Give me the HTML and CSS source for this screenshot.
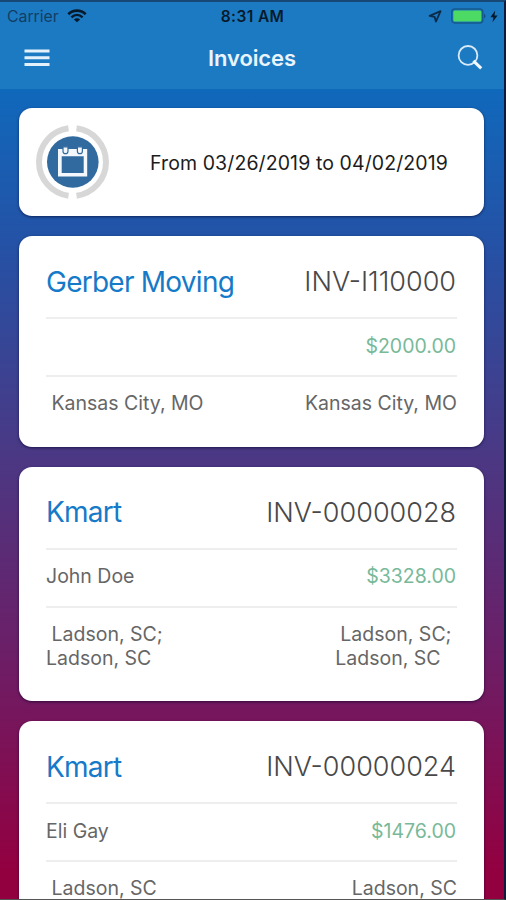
FILE: index.html
```html
<!DOCTYPE html>
<html lang="en">
<head>
    <meta charset="UTF-8">
    <meta name="viewport" content="width=device-width, initial-scale=1.0">
    <title>Invoices</title>
    <link rel="stylesheet" href="styles.css">
</head>
<body>
<div class="screen">

  <header class="header">
    <!-- Status bar -->
    <div class="status-bar">
      <div class="status-left">
        <span class="carrier">Carrier</span>
        <svg class="wifi" width="20" height="14" viewBox="0 0 20 14" fill="none" stroke="#071a2c">
          <path d="M1.3 5.2C6.2 .4 13.8 .4 18.7 5.2" stroke-width="2.6"/>
          <path d="M4.4 8.4C7.7 5.2 12.3 5.2 15.6 8.4" stroke-width="2.4"/>
          <path d="M10 13.3L6.9 10.4C8.8 8.8 11.2 8.8 13.1 10.4Z" fill="#071a2c" stroke="none"/>
        </svg>
      </div>
      <div class="clock">8:31 AM</div>
      <div class="status-right">
        <svg width="14" height="13" viewBox="0 0 14 13" fill="none" stroke="#0b2b48" stroke-width="1.8" stroke-linejoin="round">
          <path d="M12.6 1.2L1.6 5.8L6.6 6.8L7.9 11.6Z"/>
        </svg>
        <svg class="battery" width="36" height="16" viewBox="0 0 36 16">
          <rect x=".8" y="1" width="31" height="14" rx="3" fill="none" stroke="#14598d" stroke-width="1.4"/>
          <rect x="2.3" y="2.4" width="28" height="11.2" rx="1.5" fill="#4cd964"/>
          <path d="M33.2 5.5Q35.5 8 33.2 10.5Z" fill="#0d4676"/>
        </svg>
        <svg width="8" height="13" viewBox="0 0 8 13">
          <path d="M5.2 .5L.4 7.2H3.4L2.5 12.3L7.6 5.4H4.5Z" fill="#071a2c"/>
        </svg>
      </div>
    </div>

    <!-- Navigation bar -->
    <div class="nav-bar">
      <svg width="26" height="20" viewBox="0 0 26 20" stroke="#e4f1fb" stroke-width="3">
        <path d="M.5 3H25.5M.5 9.8H25.5M.5 16.6H25.5"/>
      </svg>
      <h1 class="title">Invoices</h1>
      <svg width="26" height="26" viewBox="0 0 26 26" fill="none" stroke="#d9ebf9">
        <circle cx="11" cy="10.4" r="9.4" stroke-width="1.8"/>
        <path d="M16.4 15.9L24.2 23.4" stroke="#f1f8fe" stroke-width="3.1"/>
      </svg>
    </div>
  </header>

  <main class="list">
    <section class="card date-card">
      <svg width="74" height="74" viewBox="0 0 74 74">
        <g fill="none" stroke="#d7d7d7" stroke-width="6">
          <path d="M32.5 3.3A34 34 0 0 0 32.5 70.7"/>
          <path d="M40.5 3.3A34 34 0 0 1 40.5 70.7"/>
        </g>
        <circle cx="36.8" cy="37" r="25.8" fill="#316a9f"/>
        <path d="M22 24H51.2V51.6H22Z M25.7 31.2V47.9H47.7V31.2Z" fill="#f4f8fc" fill-rule="evenodd"/>
        <g fill="#f4f8fc" stroke="#316a9f" stroke-width="1.2">
          <path d="M27 21.8V26.2A2.5 2.5 0 0 0 32 26.2V21.8Z"/>
          <path d="M41.4 21.8V26.2A2.5 2.5 0 0 0 46.4 26.2V21.8Z"/>
        </g>
      </svg>
      <div class="date-range">From 03/26/2019 to 04/02/2019</div>
    </section>

    <section class="card">
      <div class="row row-top">
        <h2 class="customer">Gerber Moving</h2>
        <span class="number">INV-I110000</span>
      </div>
      <div class="row">
        <span></span>
        <span class="amount">$2000.00</span>
      </div>
      <div class="row row-places">
        <div>&nbsp;Kansas City, MO</div>
        <div class="to">Kansas City, MO</div>
      </div>
    </section>

    <section class="card">
      <div class="row row-top">
        <h2 class="customer">Kmart</h2>
        <span class="number">INV-00000028</span>
      </div>
      <div class="row">
        <span>John Doe</span>
        <span class="amount">$3328.00</span>
      </div>
      <div class="row row-places">
        <div>&nbsp;Ladson, SC;<br>Ladson, SC</div>
        <div class="to">Ladson, SC;&nbsp;<br>Ladson, SC&nbsp;&nbsp;&nbsp;</div>
      </div>
    </section>

    <section class="card">
      <div class="row row-top">
        <h2 class="customer">Kmart</h2>
        <span class="number">INV-00000024</span>
      </div>
      <div class="row">
        <span>Eli Gay</span>
        <span class="amount">$1476.00</span>
      </div>
      <div class="row row-places">
        <div>&nbsp;Ladson, SC</div>
        <div class="to">Ladson, SC</div>
      </div>
    </section>
  </main>

</div>
</body>
</html>
```
FILE: styles.css
```css
* {
  box-sizing: border-box;
}

body {
  margin: 0;
  font-family: Inter, "Liberation Sans", sans-serif;
  font-size: 19.5px;
  color: #666;
  overflow: hidden;
}

.screen {
  height: 900px;
  overflow: hidden;
  border-top: 2px solid #174775;
  border-right: 2px solid #111a38;
  border-bottom: 1px solid #555;
  background: linear-gradient(to bottom, #1068bb 90px, #2452a6 240px, #4c3783 460px, #74185f 700px, #930040 870px);
}

.header {
  height: 87px;
  background: #1c7ac2;
}

/* Status bar */
.status-bar {
  display: grid;
  grid-template-columns: 1fr auto 1fr;
  align-items: center;
  height: 28px;
  padding: 0 6px 0 7px;
  font-size: 15px;
}

.status-left,
.status-right {
  display: flex;
  align-items: center;
}

.status-left {
  gap: 8px;
}

.carrier {
  color: #123e66;
  font-size: 15.8px;
}

.clock {
  color: #071a2c;
  font-size: 15.5px;
  font-weight: 600;
  letter-spacing: 0.4px;
}

.status-right {
  justify-content: flex-end;
}

.battery {
  margin: 0 3px 0 9px;
}

/* Navigation bar */
.nav-bar {
  display: flex;
  align-items: center;
  justify-content: space-between;
  height: 56px;
  padding: 0 21px 0 24px;
}

.title {
  margin: 0 3px 0 0;
  color: #e9f4fd;
  font-size: 22px;
  font-weight: 600;
  letter-spacing: -0.1px;
}

/* Cards */
.list {
  display: flex;
  flex-direction: column;
  gap: 20px;
  padding: 19px 20px 0 19px;
}

.card {
  flex: none;
  padding: 0 27px 31.5px;
  background: #fff;
  border-radius: 13px;
  box-shadow: 0 1px 3px rgba(0, 0, 40, 0.6);
}

.date-card {
  display: flex;
  align-items: center;
  gap: 40px;
  height: 108px;
  padding: 0 0 0 17px;
}

.date-range {
  padding-top: 1px;
  color: #1c1c1c;
  letter-spacing: 0.1px;
  white-space: nowrap;
}

.row {
  display: flex;
  align-items: center;
  justify-content: space-between;
  height: 58px;
  padding-bottom: 3px;
  border-bottom: 2px solid #eee;
}

.row-top {
  height: 83px;
  padding: 10px 0 0;
}

.row-places {
  align-items: flex-start;
  height: auto;
  padding: 14px 0 0;
  border: 0;
  line-height: 24px;
}

.customer {
  margin: 0;
  color: #157ac8;
  font-size: 28px;
  font-weight: 400;
  letter-spacing: -0.75px;
}

.number {
  padding-right: 1px;
  color: #484848;
  font-size: 27px;
  font-weight: 300;
}

.amount {
  padding-right: 1px;
  color: #78b999;
}

.to {
  text-align: right;
}
```
